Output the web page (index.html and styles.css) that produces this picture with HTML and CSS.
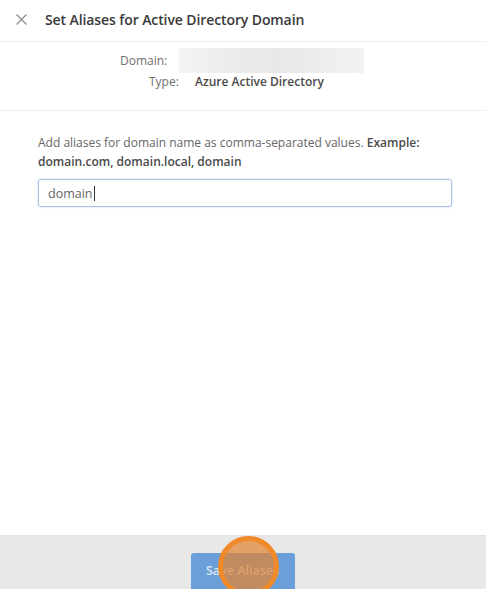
FILE: index.html
```html
<!DOCTYPE html>
<html>
<head>
<meta charset="utf-8">
<link rel="stylesheet" href="styles.css">
</head>
<body>
<div class="dialog">
  <header class="header">
    <svg class="close" width="11" height="11" viewBox="0 0 11 11"><path d="M0.5 0.5L10.5 10.5M10.5 0.5L0.5 10.5" stroke="#8a8a8a" stroke-width="1.2" fill="none"/></svg>
    <h1 class="title">Set Aliases for Active Directory Domain</h1>
  </header>
  <section class="info">
    <div class="row">
      <span class="label">Domain:</span>
      <span class="blur"></span>
    </div>
    <div class="row">
      <span class="label">Type:</span>
      <span class="value">Azure Active Directory</span>
    </div>
  </section>
  <main class="body">
    <p class="help">Add aliases for domain name as comma-separated values. <b>Example: domain.com, domain.local, domain</b></p>
    <div class="input"><span>domain</span><span class="caret"></span></div>
  </main>
  <footer class="footer">
    <button class="save">Save Aliases</button>
    <span class="click"></span>
  </footer>
</div>
</body>
</html>
```
FILE: styles.css
```css
* { box-sizing: border-box; }
html, body { margin: 0; padding: 0; background: #fff; }
body { font-family: "Open Sans", "Noto Sans", sans-serif; color: #555; overflow: hidden; }
.dialog { width: 486px; height: 589px; display: flex; flex-direction: column; }
.header { height: 42px; display: flex; align-items: center; padding-left: 16px; border-bottom: 1px solid #eeeeee; }
.close { display: block; margin-right: 18px; margin-top: -3px; }
.title { margin: 0; font-size: 14px; font-weight: 600; color: #3a3a3a; letter-spacing: -0.1px; margin-top: -3px; }
.info { height: 69px; border-bottom: 1px solid #eeeeee; padding-top: 5px; }
.row { display: flex; align-items: center; }
.row:first-child { height: 26px; padding-left: 120px; }
.row:first-child .label { width: 59px; }
.row:last-child { padding-left: 149px; height: 16px; }
.row:last-child .label { width: 46px; }
.label { font-size: 12px; color: #707070; }
.blur { width: 185px; height: 25px; background: linear-gradient(90deg, #f3f3f3 0%, #ebebeb 30%, #e8e8e8 55%, #eeeeee 80%, #f2f2f2 100%); }
.value { font-size: 12px; font-weight: 600; color: #4a4a4a; }
.body { flex: 1; padding: 22px 34px 0 38px; }
.help { margin: 0; font-size: 12px; line-height: 19px; color: #666; }
.help b { font-weight: 600; color: #4a4a4a; }
.input { margin-top: 8px; height: 28px; width: 414px; border: 1px solid #a9c2e6; border-radius: 3px; box-shadow: 0 0 2px rgba(120,160,220,0.5); display: flex; align-items: center; padding-left: 9px; font-size: 12.5px; color: #666; }
.caret { display: inline-block; width: 1px; height: 15px; background: #333; margin-left: 1px; }
.footer { height: 54px; background: #e8e8e8; border-top: 1px solid #e2e2e2; position: relative; display: flex; justify-content: center; align-items: flex-start; padding-top: 17px; }
.save { width: 104px; height: 40px; background: #6b9fda; border: none; border-radius: 3px; color: #dbe7f6; font-family: inherit; font-size: 12.5px; font-weight: 600; padding: 0 0 6px; margin-left: -1px; }
.click { position: absolute; left: 218px; top: 0; width: 61px; height: 61px; border-radius: 50%; border: 5px solid #f0892a; background: rgba(226, 132, 50, 0.72); }
```
